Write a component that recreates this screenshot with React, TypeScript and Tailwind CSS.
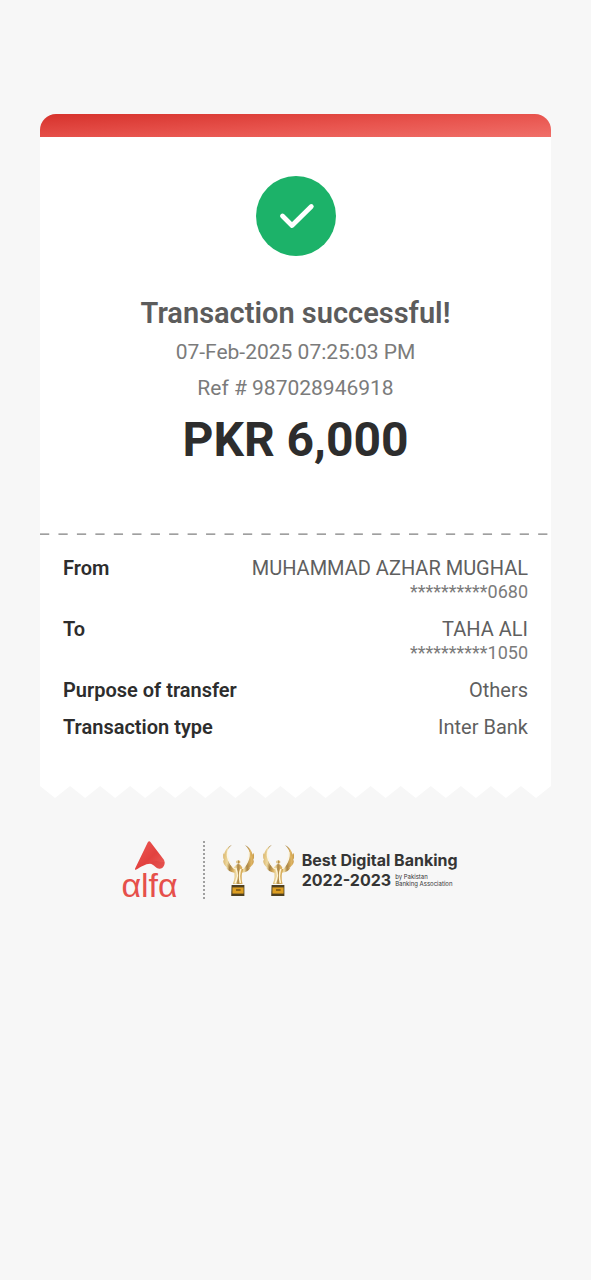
const TEETH = 17;

function Check() {
  return (
    <div className="flex size-20 items-center justify-center rounded-full bg-[#1cb269]">
      <svg viewBox="0 0 80 80" className="size-20" fill="none" aria-hidden="true">
        <path d="M26.5 40 36 49.5 55.3 30.5" stroke="#fff" strokeWidth="4.8" strokeLinecap="round" strokeLinejoin="round" />
      </svg>
    </div>
  );
}

function TornEdge() {
  let d = "M0 0";
  for (let i = 0; i < TEETH; i++) d += `L${i * 30 + 15} 12L${i * 30 + 30} 0`;
  return (
    <svg viewBox="0 0 510 12" preserveAspectRatio="none" className="block h-3 w-full" aria-hidden="true">
      <path d={d + "Z"} fill="#fff" />
    </svg>
  );
}

function DashedLine() {
  return (
    <svg viewBox="0 0 511 2" preserveAspectRatio="none" className="block h-0.5 w-full" aria-hidden="true">
      <path d="M0 1.2H511" stroke="#808080" strokeWidth="1.2" strokeDasharray="9.25 9.2" />
    </svg>
  );
}

function AlfaLogo() {
  return (
    <div className="flex flex-col items-center">
      <svg viewBox="0 0 30 30" className="size-[30px]" aria-hidden="true">
        <defs>
          <linearGradient id="mark" x1="0" y1="0" x2="1" y2="1">
            <stop offset="0" stopColor="#ee5a55" />
            <stop offset=".55" stopColor="#e2413f" />
            <stop offset="1" stopColor="#ec625d" />
          </linearGradient>
        </defs>
        <path
          d="M12.8 1.2Q14.2-.8 15.8 1.4L28.9 18.8C31 22.4 28.4 28.4 23.6 27.6C20 26.8 19 23.4 15.6 22.8C11 22.4 6.5 25.7 .9 28.8Q-.4 29 .1 27.5Z"
          fill="url(#mark)"
        />
        <path d="M14 22.6Q20 18.2 25.5 21.2L29.6 21Q29.2 28.2 23.6 27.6C20 26.8 19 23.4 14 22.6Z" fill="#d93b3b" opacity=".35" />
      </svg>
      <span className="h-7 font-['Liberation_Sans',sans-serif] text-[34px] leading-7 text-[#e6504b]">αlfα</span>
    </div>
  );
}

function Trophy() {
  return (
    <svg viewBox="0 0 34 53" className="h-[53px] w-[34px]" fill="none" aria-hidden="true">
      <defs>
        <linearGradient id="gold" x1="0" y1="0" x2="1" y2="0">
          <stop offset="0" stopColor="#d9b56c" />
          <stop offset=".3" stopColor="#efdaa0" />
          <stop offset=".5" stopColor="#a88343" />
          <stop offset=".8" stopColor="#dfb564" />
          <stop offset="1" stopColor="#c79a48" />
        </linearGradient>
      </defs>
      <g fill="url(#gold)">
        <path d="M10 .8C6 4 4.3 8 4.8 12C5.8 18 9 23 14.5 27.5L12 28.5C6 26 1.4 20 1.8 12.5C2.4 7 5 3 10 .8Z" />
        <path d="M22.5 .8C26.5 4 28.2 8 27.7 12C27 18 24 23 18.5 27.5L20.5 28.5C27 26 31.5 20 31 12.5C30 7 27.5 3 22.5 .8Z" />
        <path d="M1.4 9Q0 14 3.6 18L5.2 19Q4.2 13 1.4 9ZM1 16Q1.4 22 7 25L9 25Q6 19 1 16ZM4 23.5Q7 28.5 13 28.5L14 27Q8 25 4 23.5Z" />
        <path d="M31.5 9Q33.5 14 29.6 18L27.5 19Q28 13 31.5 9ZM32 16Q32 22 25 25L23 25Q27 19 32 16ZM28.5 23.5Q26 28.5 20 28.5L18 27Q24 25 28.5 23.5Z" />
        <path d="M11.5 25Q13.5 20 16.5 20Q19.5 20.5 21 25.5Q18.6 32 20.5 40H10.8Q14 33 11.5 25Z" />
        <ellipse cx="16.2" cy="18" rx="2.2" ry="1.7" />
      </g>
      <path d="M13.8 24Q17 32 13.2 39M18.8 25Q16.4 31 18.4 39" stroke="#fff6d8" strokeWidth="1.5" />
      <path d="M5.5 8Q5.5 18 13 25M27 8Q27 18 20 25" stroke="#fff6dc" strokeWidth="1" />
      <path d="M9.6 41H22.4V52H9.2Z" fill="#4f4020" />
      <path d="M10.4 43.4H21.6V49.6H10.4Z" fill="#dd9e22" />
      <path d="M14 46H18.6" stroke="#7d5615" strokeWidth="1.6" />
    </svg>
  );
}

type Detail = { label: string; value: string; account?: string };

const details: Detail[] = [
  { label: "From", value: "MUHAMMAD AZHAR MUGHAL", account: "**********0680" },
  { label: "To", value: "TAHA ALI", account: "**********1050" },
  { label: "Purpose of transfer", value: "Others" },
  { label: "Transaction type", value: "Inter Bank" },
];

export default function App() {
  return (
    <main className="min-h-screen bg-[#f7f7f7] px-10 pt-[114px] pb-10 font-['Roboto',sans-serif]">
      <article>
        <div className="h-[23px] rounded-t-2xl bg-[linear-gradient(177deg,#d8352f_5%,#e8544e_55%,#f06f69)]" />
        <section className="flex flex-col items-center bg-white pt-[39px] pb-[65px] text-center">
          <Check />
          <h1 className="mt-10 text-[29px] leading-[34px] font-semibold text-[#5c5c5c]">Transaction successful!</h1>
          <p className="mt-1 text-[21px] leading-9 text-[#7b7b7b]">07-Feb-2025 07:25:03 PM</p>
          <p className="text-[21px] leading-9 text-[#7b7b7b]">Ref # 987028946918</p>
          <p className="mt-1.5 text-[48px] leading-14 font-bold text-[#2d2d2d]">PKR 6,000</p>
        </section>
        <section className="bg-white">
          <DashedLine />
          <dl className="flex flex-col gap-[13px] px-[23px] pt-[21px] pb-[47px]">
            {details.map((d) => (
              <div key={d.label} className="flex justify-between gap-4">
                <dt className="text-[20px] leading-6 font-semibold text-[#2d2d2d]">{d.label}</dt>
                <dd className="text-right text-[20px] leading-6 text-[#5f5f5f]">
                  {d.value}
                  {d.account && <span className="block text-[18px] leading-6 text-[#7b7b7b]">{d.account}</span>}
                </dd>
              </div>
            ))}
          </dl>
        </section>
        <TornEdge />
      </article>

      <footer className="mt-[43px] flex items-center justify-center pr-3">
        <AlfaLogo />
        <div className="ml-[25px] h-[58px] border-l-2 border-dotted border-[#a0a0a0]" />
        <div className="ml-[17px] flex gap-1.5">
          <Trophy />
          <Trophy />
        </div>
        <div className="ml-1.5 font-['Inter',sans-serif] text-[#353535]">
          <p className="text-[16px] leading-5 font-bold whitespace-nowrap">Best Digital Banking</p>
          <div className="flex items-center gap-1">
            <p className="text-[16px] leading-5 font-bold">2022-2023</p>
            <p className="text-[6px] leading-[7px] whitespace-nowrap">
              by Pakistan
              <br />
              Banking Association
            </p>
          </div>
        </div>
      </footer>
    </main>
  );
}
